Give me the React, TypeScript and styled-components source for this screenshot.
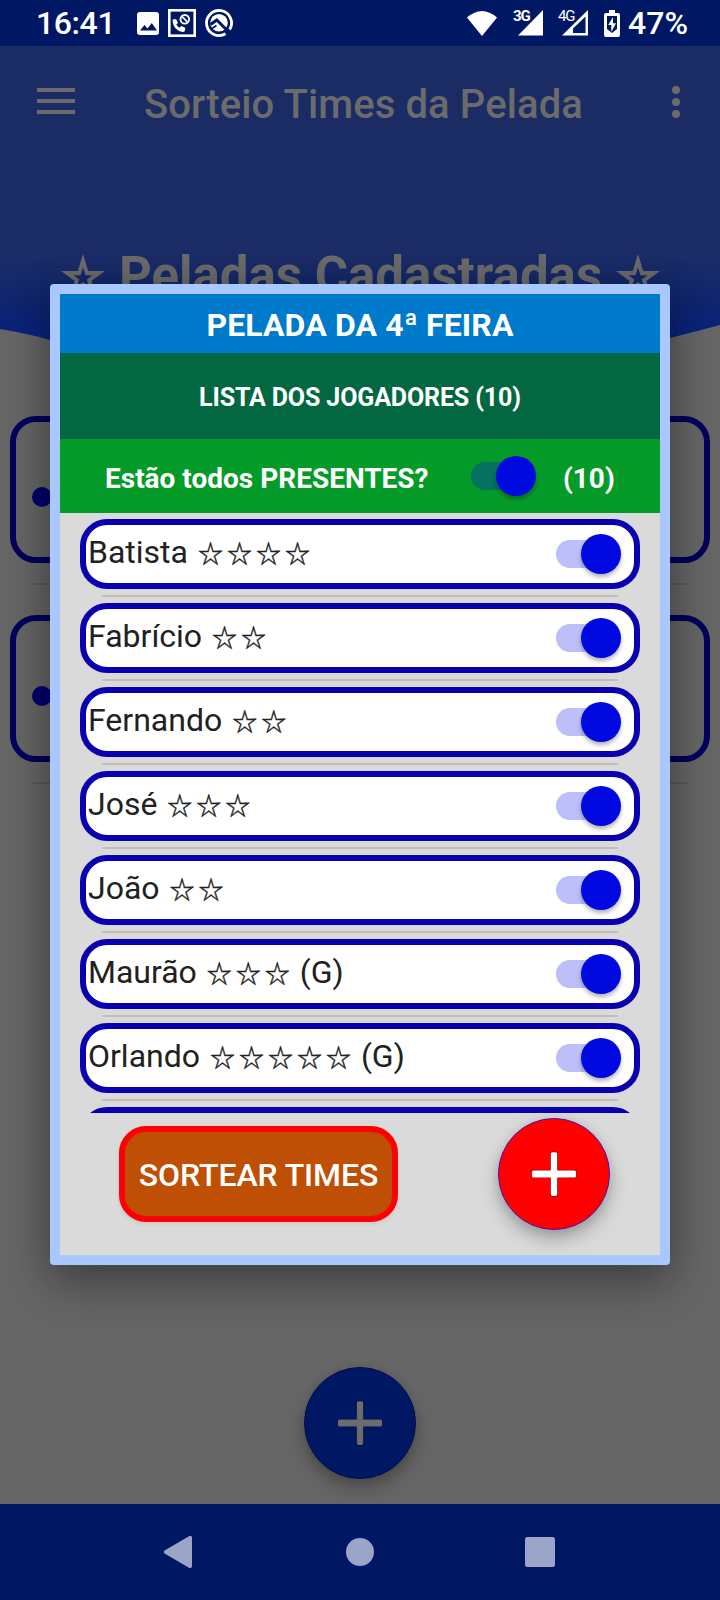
import React from "react";
import styled, { createGlobalStyle } from "styled-components";

const Global = createGlobalStyle`
  * { box-sizing: border-box; }
  html, body { margin: 0; padding: 0; }
  body { font-family: Roboto, "Noto Sans CJK JP", sans-serif; background: #666; }
`;

const Screen = styled.div`
  position: relative;
  width: 720px;
  height: 1600px;
  overflow: hidden;
  display: flex;
  flex-direction: column;
  background: #666;
`;

const StatusBar = styled.header`
  height: 46px;
  flex: none;
  display: flex;
  align-items: center;
  padding: 0 33px 0 36px;
  background: #001764;
  color: #fff;
  font-size: 32px;
  font-weight: 500;
  line-height: 46px;
`;

const StatusGroup = styled.div<{ $gap: number; $push?: boolean }>`
  display: flex;
  align-items: center;
  gap: ${(p) => p.$gap}px;
  margin-left: ${(p) => (p.$push ? "auto" : "25px")};
  svg { display: block; flex: none; overflow: visible; }
`;

const Clock = styled.span`
  width: 76px;
  letter-spacing: -0.4px;
  white-space: nowrap;
`;

const Percent = styled.span`
  width: 59px;
  margin-left: -8px;
  white-space: nowrap;
`;

const Signal = styled.span`
  position: relative;
  display: block;
  width: 29px;
  height: 26px;
`;

const SignalLabel = styled.span<{ $bold: boolean }>`
  position: absolute;
  left: -1px;
  top: -3px;
  font-size: 15px;
  font-weight: ${(p) => (p.$bold ? 700 : 400)};
  line-height: 18px;
  letter-spacing: -1.2px;
  white-space: nowrap;
  -webkit-text-stroke: 2px #001764;
  paint-order: stroke fill;
`;

const Hero = styled.section`
  position: relative;
  height: 354px;
  flex: none;
`;

const HeroWave = styled.svg`
  position: absolute;
  inset: 0;
  display: block;
`;

const AppBar = styled.div`
  position: relative;
  height: 112px;
  display: flex;
  align-items: center;
  padding: 0 40px 0 37px;
  color: #6b6b6b;
`;

const AppTitle = styled.h1`
  margin: 5px auto 0 69px;
  font-size: 40px;
  font-weight: 500;
  letter-spacing: 0.1px;
  line-height: 48px;
  white-space: nowrap;
`;

const MenuIcon = styled.div`
  width: 38px;
  height: 26px;
  margin-top: -2px;
  display: flex;
  flex-direction: column;
  justify-content: space-between;
  i { height: 4px; background: currentColor; }
`;

const MoreIcon = styled.div`
  width: 8px;
  height: 32px;
  display: flex;
  flex-direction: column;
  justify-content: space-between;
  i { height: 8px; border-radius: 50%; background: currentColor; }
`;

const HeroTitle = styled.h2`
  position: relative;
  margin: 82px 0 0;
  display: flex;
  justify-content: center;
  align-items: center;
  gap: 14px;
  padding-left: 1px;
  color: #6b6b6b;
  font-size: 51px;
  font-weight: 700;
  line-height: 72px;
  white-space: nowrap;
`;

const HeroStar = styled.svg`
  width: 44px;
  height: 44px;
  flex: none;
`;

const GameList = styled.main`
  flex: 1;
  display: flex;
  flex-direction: column;
  padding: 16px 10px 0;
`;

const GameCard = styled.div`
  height: 147px;
  flex: none;
  border: 6px solid #00005c;
  border-radius: 26px;
  display: flex;
  align-items: center;
  padding: 14px 0 0 16px;
`;

const Bullet = styled.i`
  width: 20px;
  height: 20px;
  border-radius: 50%;
  background: #00006e;
`;

const GameRule = styled.div`
  height: 2px;
  flex: none;
  margin: 20px 22px 30px;
  background: #595959;
`;

const FabSlot = styled.div`
  display: flex;
  justify-content: center;
  margin-top: auto;
  padding-bottom: 25px;
`;

const Fab = styled.button<{ $bg: string; $line: string; $ink: string; $edge: string }>`
  width: 112px;
  height: 112px;
  padding: 0;
  flex: none;
  display: grid;
  place-items: center;
  border: 1px solid ${(p) => p.$line};
  border-radius: 50%;
  background: ${(p) => p.$bg};
  box-shadow: 0 9px 18px rgba(0, 0, 0, 0.25), 0 2px 8px rgba(0, 0, 0, 0.1);
  svg { display: block; }
  path { fill: ${(p) => p.$ink}; stroke: ${(p) => p.$edge}; paint-order: stroke; }
`;

const NavBar = styled.nav`
  height: 96px;
  flex: none;
  display: flex;
  align-items: center;
  justify-content: space-between;
  padding: 0 165px 0 163px;
  background: #001764;
  svg { display: block; fill: #9aa5c8; }
`;

const Dialog = styled.div`
  position: absolute;
  left: 50px;
  top: 284px;
  width: 620px;
  height: 981px;
  display: flex;
  flex-direction: column;
  border: 10px solid #a9c8ff;
  border-radius: 4px;
  background: #dadada;
  box-shadow: 0 20px 50px rgba(0, 0, 0, 0.3), 0 4px 34px rgba(0, 0, 0, 0.18);
`;

const Band = styled.div<{ $h: number; $bg: string; $size: number; $drop?: number; $track?: number }>`
  height: ${(p) => p.$h}px;
  flex: none;
  display: flex;
  align-items: center;
  justify-content: center;
  padding-top: ${(p) => p.$drop ?? 0}px;
  background: ${(p) => p.$bg};
  color: #fff;
  font-size: ${(p) => p.$size}px;
  font-weight: 700;
  letter-spacing: ${(p) => p.$track ?? 0}px;
  white-space: nowrap;
`;

const PresenceBand = styled(Band)`
  justify-content: flex-start;
  padding: 0 0 0 45px;
`;

const PresenceLabel = styled.span`
  width: 366px;
  padding-top: 4px;
`;

const PresenceCount = styled.span`
  margin-left: 27px;
  padding-top: 4px;
`;

const Switch = styled.span`
  width: 65px;
  height: 40px;
  flex: none;
  display: flex;
  align-items: center;
  justify-content: flex-end;
`;

const Track = styled.i<{ $color: string }>`
  width: 56px;
  height: 28px;
  margin-right: -31px;
  border-radius: 14px;
  background: ${(p) => p.$color};
`;

const Knob = styled.i`
  position: relative;
  width: 40px;
  height: 40px;
  border-radius: 50%;
  background: #0009e0;
  box-shadow: 0 3px 4px rgba(0, 0, 0, 0.3);
`;

const Players = styled.div`
  height: 600px;
  flex: none;
  overflow: hidden;
  padding: 6px 20px 0;
`;

const PlayerRow = styled.div`
  height: 70px;
  display: flex;
  align-items: center;
  justify-content: space-between;
  padding: 0 13px 0 2px;
  border: 6px solid #0a00b0;
  border-radius: 27px;
  background: #fff;
`;

const PlayerRule = styled.div`
  height: 2px;
  margin: 6px 22px;
  background: #bebebe;
`;

const PlayerName = styled.span`
  display: flex;
  align-items: baseline;
  margin-top: -5px;
  color: #212121;
  font-size: 32px;
  line-height: 38px;
  white-space: pre;
`;

const Stars = styled.span`
  margin: 0 -2px 0 2px;
  font-family: "Noto Sans CJK JP", sans-serif;
  font-size: 25px;
  letter-spacing: 4px;
  line-height: 38px;
  -webkit-text-stroke: 0.4px #212121;
`;

const Actions = styled.div`
  flex: 1;
  display: flex;
  align-items: flex-start;
  justify-content: space-between;
  padding: 5px 50px 0 59px;
`;

const DrawButton = styled.button`
  width: 279px;
  height: 96px;
  margin-top: 8px;
  padding: 2px 0 0;
  border: 6px solid #ff0000;
  border-radius: 27px;
  background: #bf4f04;
  color: #fff;
  font: 500 32px/40px Roboto, sans-serif;
  letter-spacing: -0.1px;
  white-space: nowrap;
  box-shadow: 0 2px 4px rgba(0, 0, 0, 0.08);
`;

const PlusIcon = () => (
  <svg width="48" height="48" viewBox="0 0 48 48">
    <path
      strokeWidth="1.600"
      d="M22.500 2.200h3q1.700 0 1.700 1.500v16.900h17.200q1.700 0 1.700 1.500v3.800q0 1.500-1.700 1.500H27.200V44.300q0 1.700-1.700 1.700h-3q-1.700 0-1.700-1.700V27.400H3.600q-1.700 0-1.700-1.500v-3.800q0-1.500 1.700-1.500h17.200V3.700q0-1.500 1.700-1.500z"
    />
  </svg>
);

const StarOutline = () => (
  <HeroStar viewBox="0 0 44 44">
    <path
      fillRule="evenodd"
      fill="currentColor"
      d="M22 0 L27.200 17 H44 L30.400 26.900 L35.600 43.500 L22 33.300 L8.400 43.500 L13.600 26.900 L0 17 H16.800 Z M22 13.500 L19.500 21.300 H12.500 L18.200 25.400 L16 32.500 L22 28 L28 32.500 L25.800 25.400 L31.500 21.300 H24.500 Z"
    />
  </HeroStar>
);

const PictureIcon = () => (
  <svg width="22" height="23" viewBox="0 0 22 23">
    <rect width="22" height="23" rx="3" fill="#fff" />
    <path d="M3 18.500 L7.500 13 L10.500 16.500 L14.800 11 L20 18.500 Z" fill="#001764" />
  </svg>
);

const CallBlockIcon = () => (
  <svg width="28" height="28" viewBox="0 0 28 28">
    <rect x="1.300" y="1.300" width="25.400" height="25.400" fill="none" stroke="#fff" strokeWidth="2.600" />
    <circle cx="16.800" cy="10.300" r="4.300" fill="none" stroke="#fff" strokeWidth="1.900" />
    <path d="M14 7.500 L19.600 13.100" stroke="#fff" strokeWidth="1.700" />
    <path d="M5 10.500 l3-.6 2 4 -1.700 1.500 q1.200 2.300 3.300 3.300 l1.700-1.700 3.900 1.800 -.4 3.100 q-.5 1.200-2 1.100 Q5.300 21.500 4.600 12 q0-1.200.4-1.500z" fill="#fff" />
  </svg>
);

const NewsIcon = () => (
  <svg width="28" height="28" viewBox="0 0 28 28">
    <path d="M20.500 24.700 A12.500 12.500 0 1 1 24.700 20.500" fill="none" stroke="#fff" strokeWidth="2.800" />
    <circle cx="14" cy="13.800" r="8.800" fill="#fff" />
    <path d="M5.500 15.500 L11.800 11 L22.500 21.700" fill="none" stroke="#001764" strokeWidth="3" />
    <path d="M7 19.500 L11.500 16.500" fill="none" stroke="#001764" strokeWidth="1.800" />
  </svg>
);

const WifiIcon = () => (
  <svg width="31" height="25" viewBox="0 0 31 25">
    <path d="M0 6.500 Q15 -6.500 30 6.500 L15 25 Z" fill="#fff" />
  </svg>
);

const SignalIcon = ({ label, hollow = false }: { label: string; hollow?: boolean }) => (
  <Signal>
    <svg width="29" height="26" viewBox="0 0 29 26">
      {hollow ? (
        <path fillRule="evenodd" d="M29 0 V25.500 H3 Z M26.500 6.500 L14 18.500 V23 H26.500 Z" fill="#fff" />
      ) : (
        <path d="M29 0 V25.500 H4 Z" fill="#fff" />
      )}
    </svg>
    <SignalLabel $bold={!hollow}>{label}</SignalLabel>
  </Signal>
);

const BatteryIcon = () => (
  <svg width="16" height="27" viewBox="0 0 16 27">
    <path d="M5 0h6v3h3q2 0 2 2v20q0 2-2 2H2q-2 0-2-2V5q0-2 2-2h3z" fill="#fff" />
    <path d="M3 6 H13 V19 L8 23 L3 19 Z" fill="#001764" />
    <path d="M9 7 L4.200 15 H7.300 V22 L12 13.300 H9 Z" fill="#fff" />
  </svg>
);

const Toggle = ({ track }: { track: string }) => (
  <Switch>
    <Track $color={track} />
    <Knob />
  </Switch>
);

type Player = { name: string; stars: number; keeper?: boolean };

const players: Player[] = [
  { name: "Batista", stars: 4 },
  { name: "Fabrício", stars: 2 },
  { name: "Fernando", stars: 2 },
  { name: "José", stars: 3 },
  { name: "João", stars: 2 },
  { name: "Maurão", stars: 3, keeper: true },
  { name: "Orlando", stars: 5, keeper: true },
];

export default function App() {
  return (
    <>
      <Global />
      <Screen>
        <StatusBar>
          <Clock>16:41</Clock>
          <StatusGroup $gap={9}>
            <PictureIcon />
            <CallBlockIcon />
            <NewsIcon />
          </StatusGroup>
          <StatusGroup $gap={16} $push>
            <WifiIcon />
            <SignalIcon label="3G" />
            <SignalIcon label="4G" hollow />
            <BatteryIcon />
            <Percent>47%</Percent>
          </StatusGroup>
        </StatusBar>

        <Hero>
          <HeroWave width="720" height="354" viewBox="0 0 720 354">
            <defs>
              <linearGradient id="hero" x1="0" y1="0" x2="0" y2="354" gradientUnits="userSpaceOnUse">
                <stop offset="0" stopColor="#1b2c64" />
                <stop offset="0.600" stopColor="#1b2c66" />
                <stop offset="0.730" stopColor="#0e2570" />
                <stop offset="0.820" stopColor="#08237e" />
                <stop offset="1" stopColor="#08237e" />
              </linearGradient>
            </defs>
            <path d="M0 0 H720 V279 Q690 287 670 292 Q360 360 50 294 Q30 288 0 283 Z" fill="url(#hero)" />
          </HeroWave>
          <AppBar>
            <MenuIcon><i /><i /><i /></MenuIcon>
            <AppTitle>Sorteio Times da Pelada</AppTitle>
            <MoreIcon><i /><i /><i /></MoreIcon>
          </AppBar>
          <HeroTitle>
            <StarOutline />
            <span>Peladas Cadastradas</span>
            <StarOutline />
          </HeroTitle>
        </Hero>

        <GameList>
          <GameCard><Bullet /></GameCard>
          <GameRule />
          <GameCard><Bullet /></GameCard>
          <GameRule />
          <FabSlot>
            <Fab $bg="#001764" $line="#000f52" $ink="#6b6b70" $edge="#000d40" aria-label="Nova pelada">
              <PlusIcon />
            </Fab>
          </FabSlot>
        </GameList>

        <NavBar>
          <svg width="32" height="34" viewBox="0 0 32 34">
            <path d="M1.500 15.500 L26 1.200 Q29 0 29 3 V31 Q29 34 26 32.800 L1.500 18.500 Q0 17 1.500 15.500z" />
          </svg>
          <svg width="28" height="28" viewBox="0 0 28 28"><circle cx="14" cy="14" r="14" /></svg>
          <svg width="30" height="30" viewBox="0 0 30 30"><rect width="30" height="30" rx="2.500" /></svg>
        </NavBar>

        <Dialog role="dialog">
          <Band $h={59} $bg="#007aca" $size={32} $drop={2} $track={0.12}>PELADA DA 4ª FEIRA</Band>
          <Band $h={86} $bg="#036841" $size={25} $drop={3} $track={-0.13}>LISTA DOS JOGADORES (10)</Band>
          <PresenceBand $h={74} $bg="#059b29" $size={28}>
            <PresenceLabel>Estão todos PRESENTES?</PresenceLabel>
            <Toggle track="#067063" />
            <PresenceCount>(10)</PresenceCount>
          </PresenceBand>
          <Players>
            {players.map((p) => (
              <React.Fragment key={p.name}>
                <PlayerRow>
                  <PlayerName>
                    {p.name + " "}
                    <Stars>{"☆".repeat(p.stars)}</Stars>
                    {p.keeper ? " (G)" : ""}
                  </PlayerName>
                  <Toggle track="#bcbff9" />
                </PlayerRow>
                <PlayerRule />
              </React.Fragment>
            ))}
            <PlayerRow />
          </Players>
          <Actions>
            <DrawButton>SORTEAR TIMES</DrawButton>
            <Fab $bg="#ff0000" $line="#4a0fb4" $ink="#ffffff" $edge="#a00000" aria-label="Novo jogador">
              <PlusIcon />
            </Fab>
          </Actions>
        </Dialog>
      </Screen>
    </>
  );
}
